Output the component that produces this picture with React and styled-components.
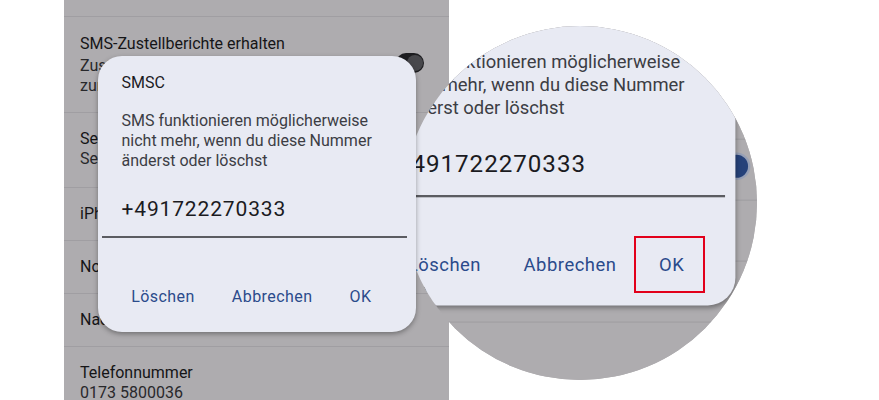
import React from "react";
import styled, { createGlobalStyle } from "styled-components";

const GlobalStyle = createGlobalStyle`
  html, body {
    margin: 0;
    background: #ffffff;
  }
  body {
    font-family: Roboto, "Noto Sans", Arial, sans-serif;
  }
`;

const Stage = styled.div`
  position: relative;
  width: 879px;
  height: 400px;
  overflow: hidden;
  background: #ffffff;
`;

// the page copy that holds the phone, used once as is and once inside the lens
const Canvas = styled.div`
  width: 879px;
  height: 400px;
  box-sizing: border-box;
  padding-left: 64px;
  display: flex;
  ${(p) =>
    p.$zoomed &&
    `
    transform-origin: 0 0;
    transform: translate(-146px, -102.4px) scale(1.15);
  `}
`;

const Screen = styled.div`
  position: relative;
  flex: none;
  width: 385px;
  height: 400px;
  background: #aeacaf;
  overflow: hidden;
`;

const TopRow = styled.div`
  height: 16px;
  border-bottom: 1px solid #a09ea2;
`;

const Row = styled.div`
  position: relative;
  padding: ${(p) => p.$pad || "16px 16px 16px"};
  border-bottom: ${(p) => (p.$last ? "none" : "1px solid #a09ea2")};
`;

const Title = styled.div`
  font-size: 16px;
  line-height: 20px;
  color: #151517;
  white-space: nowrap;
`;

const Sub = styled.div`
  margin-top: ${(p) => p.$gap || 0}px;
  font-size: 16px;
  line-height: 20px;
  color: #28282b;
  white-space: nowrap;
`;

const Track = styled.div`
  position: absolute;
  right: ${(p) => (p.$on ? "20px" : "25px")};
  top: ${(p) => (p.$on ? "11px" : "36px")};
  width: ${(p) => (p.$on ? "48px" : "28px")};
  height: ${(p) => (p.$on ? "24px" : "20px")};
  border-radius: 12px;
  background: ${(p) => (p.$on ? "#97a0b6" : "#1d1d20")};
`;

const Thumb = styled.div`
  position: absolute;
  right: ${(p) => (p.$on ? "2px" : "1px")};
  top: 50%;
  transform: translateY(-50%);
  width: ${(p) => (p.$on ? "20px" : "16px")};
  height: ${(p) => (p.$on ? "20px" : "16px")};
  border-radius: 50%;
  background: ${(p) => (p.$on ? "#26427a" : "#48484c")};
`;

const DialogLayer = styled.div`
  position: absolute;
  inset: 0;
  display: flex;
  align-items: center;
  justify-content: center;
  padding-bottom: 12px;
`;

const Dialog = styled.div`
  position: relative;
  z-index: 2;
  width: 318px;
  height: 276px;
  box-sizing: border-box;
  padding-top: 16px;
  display: flex;
  flex-direction: column;
  background: #e8eaf3;
  border-radius: 24px;
  box-shadow: 0 2px 5px rgba(0, 0, 0, 0.35);
`;

const DialogTitle = styled.div`
  padding: 0 24px;
  font-size: 16px;
  line-height: 22px;
  color: #1b1b1f;
`;

const DialogText = styled.div`
  margin-top: 17px;
  padding: 0 24px;
  font-size: 16px;
  line-height: 20px;
  color: #3c3d44;
  white-space: nowrap;
`;

const Field = styled.div`
  margin: 24px 9px 0 4px;
  padding: 0 0 13px 20px;
  border-bottom: 2px solid #5b5c61;
  font-size: 21px;
  line-height: 28px;
  letter-spacing: 0.85px;
  color: #1b1b1f;
`;

const Actions = styled.div`
  margin-top: 38px;
  height: 40px;
  padding-right: 30px;
  display: flex;
  align-items: center;
  justify-content: flex-end;
  gap: 9px;
`;

const ActionButton = styled.button`
  padding: 0 14px;
  border: none;
  background: none;
  font-family: inherit;
  font-size: 16px;
  font-weight: 400;
  letter-spacing: 0.45px;
  color: #2b4b8b;
`;

const Lens = styled.div`
  position: absolute;
  z-index: 1;
  left: 403px;
  top: 26px;
  width: 354px;
  height: 354px;
  border-radius: 50%;
  overflow: hidden;
  background: #aeacaf;
`;

const Highlight = styled.div`
  position: absolute;
  left: 231px;
  top: 210px;
  width: 71px;
  height: 57px;
  box-sizing: border-box;
  border: 2px solid #e2001a;
`;

function PhoneScreen() {
  return (
    <Screen>
      <TopRow />
      <Row $pad="17px 16px 16px">
        <Title>SMS-Zustellberichte erhalten</Title>
        <Sub $gap={2}>Zustellbericht für jede gesendete SMS</Sub>
        <Sub>zurückfordern</Sub>
        <Track>
          <Thumb />
        </Track>
      </Row>
      <Row $pad="16px 16px 18px">
        <Title>Service-Nachrichten</Title>
        <Sub>Service-Nachrichten anzeigen</Sub>
      </Row>
      <Row>
        <Title>iPhone-Reaktionen als Emojis</Title>
        <Track $on>
          <Thumb $on />
        </Track>
      </Row>
      <Row>
        <Title>Notfallbenachrichtigungen</Title>
      </Row>
      <Row>
        <Title>Nachrichtenlimits</Title>
      </Row>
      <Row $last>
        <Title>Telefonnummer</Title>
        <Sub>0173 5800036</Sub>
      </Row>
      <DialogLayer>
        <Dialog>
          <DialogTitle>SMSC</DialogTitle>
          <DialogText>
            SMS funktionieren möglicherweise
            <br />
            nicht mehr, wenn du diese Nummer
            <br />
            änderst oder löschst
          </DialogText>
          <Field>+491722270333</Field>
          <Actions>
            <ActionButton>Löschen</ActionButton>
            <ActionButton>Abbrechen</ActionButton>
            <ActionButton>OK</ActionButton>
          </Actions>
        </Dialog>
      </DialogLayer>
    </Screen>
  );
}

export default function App() {
  return (
    <>
      <GlobalStyle />
      <Stage>
        <Canvas>
          <PhoneScreen />
        </Canvas>
        <Lens>
          <Canvas $zoomed>
            <PhoneScreen />
          </Canvas>
          <Highlight />
        </Lens>
      </Stage>
    </>
  );
}
